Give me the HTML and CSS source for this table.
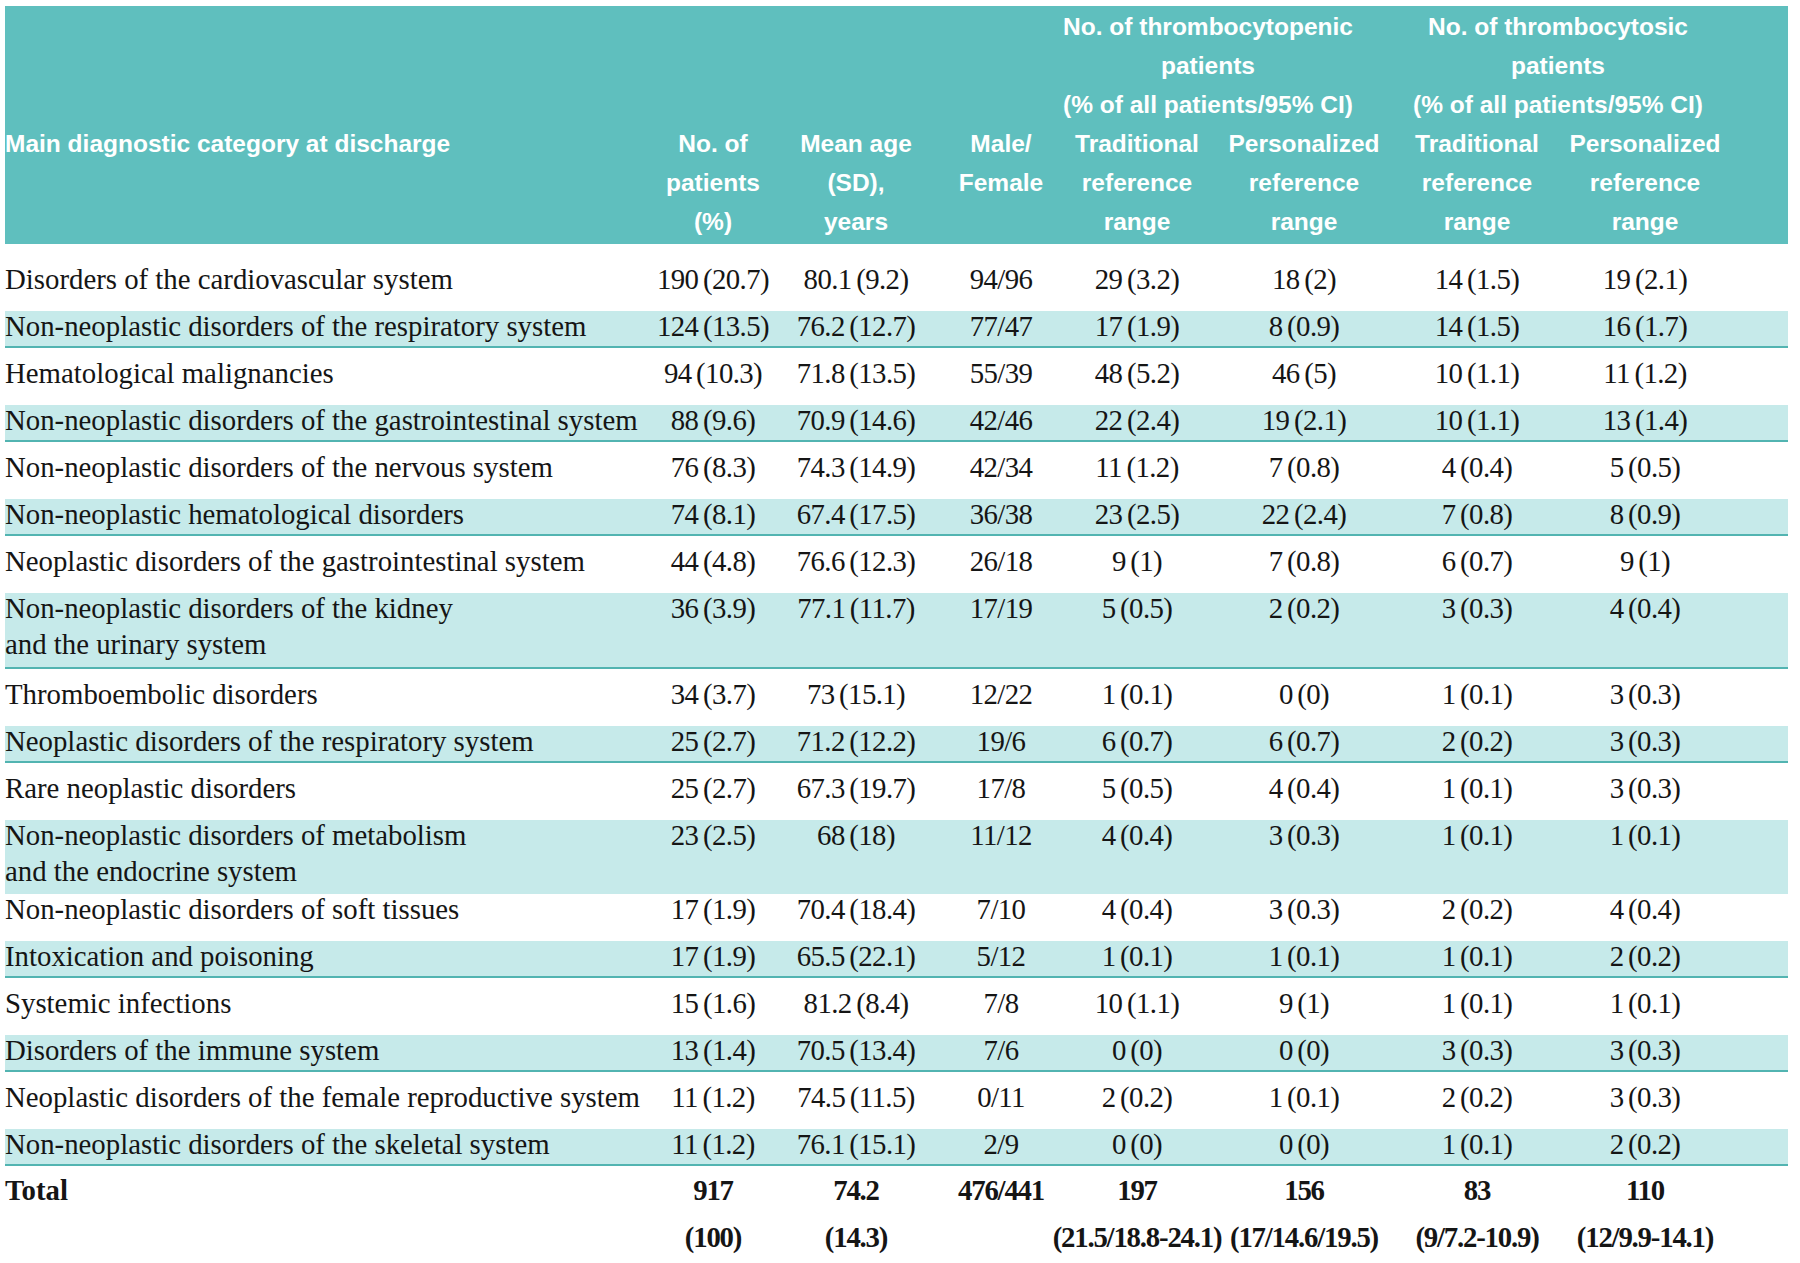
FILE: index.html
```html
<!DOCTYPE html>
<html lang="en">
<head>
<meta charset="utf-8">
<title>Platelet counts by diagnostic category</title>
<link rel="stylesheet" href="styles.css">
</head>
<body>
<div class="page">
  <div class="grid head">
    <div class="h-grp g1">No. of thrombocytopenic<br>patients<br>(% of all patients/95% CI)</div>
    <div class="h-grp g2">No. of thrombocytosic<br>patients<br>(% of all patients/95% CI)</div>
    <div class="h-main">Main diagnostic category at discharge</div>
    <div class="h-sub">No. of<br>patients<br>(%)</div>
    <div class="h-sub">Mean age<br>(SD),<br>years</div>
    <div class="h-sub">Male/<br>Female</div>
    <div class="h-sub">Traditional<br>reference<br>range</div>
    <div class="h-sub">Personalized<br>reference<br>range</div>
    <div class="h-sub">Traditional<br>reference<br>range</div>
    <div class="h-sub">Personalized<br>reference<br>range</div>
  </div>

  <div class="grid row"><div class="lab">Disorders of the cardiovascular system</div><div class="c">190 (20.7)</div><div class="c">80.1 (9.2)</div><div class="c">94/96</div><div class="c">29 (3.2)</div><div class="c">18 (2)</div><div class="c">14 (1.5)</div><div class="c">19 (2.1)</div></div>
  <div class="grid row shade"><div class="lab">Non-neoplastic disorders of the respiratory system</div><div class="c">124 (13.5)</div><div class="c">76.2 (12.7)</div><div class="c">77/47</div><div class="c">17 (1.9)</div><div class="c">8 (0.9)</div><div class="c">14 (1.5)</div><div class="c">16 (1.7)</div></div>
  <div class="grid row"><div class="lab">Hematological malignancies</div><div class="c">94 (10.3)</div><div class="c">71.8 (13.5)</div><div class="c">55/39</div><div class="c">48 (5.2)</div><div class="c">46 (5)</div><div class="c">10 (1.1)</div><div class="c">11 (1.2)</div></div>
  <div class="grid row shade"><div class="lab">Non-neoplastic disorders of the gastrointestinal system</div><div class="c">88 (9.6)</div><div class="c">70.9 (14.6)</div><div class="c">42/46</div><div class="c">22 (2.4)</div><div class="c">19 (2.1)</div><div class="c">10 (1.1)</div><div class="c">13 (1.4)</div></div>
  <div class="grid row"><div class="lab">Non-neoplastic disorders of the nervous system</div><div class="c">76 (8.3)</div><div class="c">74.3 (14.9)</div><div class="c">42/34</div><div class="c">11 (1.2)</div><div class="c">7 (0.8)</div><div class="c">4 (0.4)</div><div class="c">5 (0.5)</div></div>
  <div class="grid row shade"><div class="lab">Non-neoplastic hematological disorders</div><div class="c">74 (8.1)</div><div class="c">67.4 (17.5)</div><div class="c">36/38</div><div class="c">23 (2.5)</div><div class="c">22 (2.4)</div><div class="c">7 (0.8)</div><div class="c">8 (0.9)</div></div>
  <div class="grid row"><div class="lab">Neoplastic disorders of the gastrointestinal system</div><div class="c">44 (4.8)</div><div class="c">76.6 (12.3)</div><div class="c">26/18</div><div class="c">9 (1)</div><div class="c">7 (0.8)</div><div class="c">6 (0.7)</div><div class="c">9 (1)</div></div>
  <div class="grid row shade two"><div class="lab"><span class="ln">Non-neoplastic disorders of the kidney</span><span class="ln ln2">and the urinary system</span></div><div class="c">36 (3.9)</div><div class="c">77.1 (11.7)</div><div class="c">17/19</div><div class="c">5 (0.5)</div><div class="c">2 (0.2)</div><div class="c">3 (0.3)</div><div class="c">4 (0.4)</div></div>
  <div class="grid row"><div class="lab">Thromboembolic disorders</div><div class="c">34 (3.7)</div><div class="c">73 (15.1)</div><div class="c">12/22</div><div class="c">1 (0.1)</div><div class="c">0 (0)</div><div class="c">1 (0.1)</div><div class="c">3 (0.3)</div></div>
  <div class="grid row shade"><div class="lab">Neoplastic disorders of the respiratory system</div><div class="c">25 (2.7)</div><div class="c">71.2 (12.2)</div><div class="c">19/6</div><div class="c">6 (0.7)</div><div class="c">6 (0.7)</div><div class="c">2 (0.2)</div><div class="c">3 (0.3)</div></div>
  <div class="grid row"><div class="lab">Rare neoplastic disorders</div><div class="c">25 (2.7)</div><div class="c">67.3 (19.7)</div><div class="c">17/8</div><div class="c">5 (0.5)</div><div class="c">4 (0.4)</div><div class="c">1 (0.1)</div><div class="c">3 (0.3)</div></div>
  <div class="grid row shade two noline"><div class="lab"><span class="ln">Non-neoplastic disorders of metabolism</span><span class="ln ln2">and the endocrine system</span></div><div class="c">23 (2.5)</div><div class="c">68 (18)</div><div class="c">11/12</div><div class="c">4 (0.4)</div><div class="c">3 (0.3)</div><div class="c">1 (0.1)</div><div class="c">1 (0.1)</div></div>
  <div class="grid row tight"><div class="lab">Non-neoplastic disorders of soft tissues</div><div class="c">17 (1.9)</div><div class="c">70.4 (18.4)</div><div class="c">7/10</div><div class="c">4 (0.4)</div><div class="c">3 (0.3)</div><div class="c">2 (0.2)</div><div class="c">4 (0.4)</div></div>
  <div class="grid row shade"><div class="lab">Intoxication and poisoning</div><div class="c">17 (1.9)</div><div class="c">65.5 (22.1)</div><div class="c">5/12</div><div class="c">1 (0.1)</div><div class="c">1 (0.1)</div><div class="c">1 (0.1)</div><div class="c">2 (0.2)</div></div>
  <div class="grid row"><div class="lab">Systemic infections</div><div class="c">15 (1.6)</div><div class="c">81.2 (8.4)</div><div class="c">7/8</div><div class="c">10 (1.1)</div><div class="c">9 (1)</div><div class="c">1 (0.1)</div><div class="c">1 (0.1)</div></div>
  <div class="grid row shade"><div class="lab">Disorders of the immune system</div><div class="c">13 (1.4)</div><div class="c">70.5 (13.4)</div><div class="c">7/6</div><div class="c">0 (0)</div><div class="c">0 (0)</div><div class="c">3 (0.3)</div><div class="c">3 (0.3)</div></div>
  <div class="grid row"><div class="lab">Neoplastic disorders of the female reproductive system</div><div class="c">11 (1.2)</div><div class="c">74.5 (11.5)</div><div class="c">0/11</div><div class="c">2 (0.2)</div><div class="c">1 (0.1)</div><div class="c">2 (0.2)</div><div class="c">3 (0.3)</div></div>
  <div class="grid row shade"><div class="lab">Non-neoplastic disorders of the skeletal system</div><div class="c">11 (1.2)</div><div class="c">76.1 (15.1)</div><div class="c">2/9</div><div class="c">0 (0)</div><div class="c">0 (0)</div><div class="c">1 (0.1)</div><div class="c">2 (0.2)</div></div>
  <div class="grid row total"><div class="lab">Total</div><div class="c">917<br>(100)</div><div class="c">74.2<br>(14.3)</div><div class="c">476/441</div><div class="c">197<br>(21.5/18.8-24.1)</div><div class="c">156<br>(17/14.6/19.5)</div><div class="c">83<br>(9/7.2-10.9)</div><div class="c">110<br>(12/9.9-14.1)</div></div>
</div>
</body>
</html>
```
FILE: styles.css
```css
html, body {
  margin: 0;
  padding: 0;
  background: #ffffff;
}

body {
  font-family: "Liberation Serif", "Times New Roman", serif;
  color: #151515;
}

.page {
  width: 1783px;
  padding: 6px 12px 0 5px;
}

.grid {
  display: grid;
  grid-template-columns: 636px 144px 142px 148px 124px 210px 136px 200px 43px;
}

/* header */
.head {
  background: #5fbfbe;
  color: #ffffff;
  font-family: "Liberation Sans", Arial, sans-serif;
  font-weight: bold;
  font-size: 24.5px;
  line-height: 39px;
  grid-template-rows: 117px 117px;
  padding: 1px 0 3px;
  margin-bottom: 20px;
}

.head > div {
  white-space: nowrap;
}

.h-grp {
  grid-row: 1;
  justify-self: center;
  text-align: center;
}

.g1 {
  grid-column: 5 / 7;
  padding-right: 68px;
}

.g2 {
  grid-column: 7 / 9;
  padding-right: 38px;
}

.h-main {
  grid-row: 2;
  grid-column: 1;
  justify-self: start;
}

.h-sub {
  grid-row: 2;
  justify-self: center;
  text-align: center;
}

/* body rows */
.row {
  font-size: 28.8px;
  line-height: 30px;
  margin-top: 10px;
  padding-bottom: 5px;
  border-bottom: 2px solid transparent;
}

.row > div {
  white-space: nowrap;
}

.row.shade {
  background: #c6eaea;
  border-bottom-color: #52b4b1;
}

.row.two {
  padding-bottom: 8px;
}

.ln {
  display: block;
}

.ln2 {
  padding-top: 6px;
}

.row.shade.noline {
  border-bottom: 0;
}

.row.tight {
  margin-top: 0;
}

.lab {
  justify-self: start;
}

.c {
  justify-self: center;
  text-align: center;
  letter-spacing: -0.6px;
  word-spacing: -2px;
}

.row.total {
  font-weight: bold;
  line-height: 47px;
  margin-top: 1px;
  padding-bottom: 0;
}

.row.total .c {
  letter-spacing: -1.2px;
}
```
